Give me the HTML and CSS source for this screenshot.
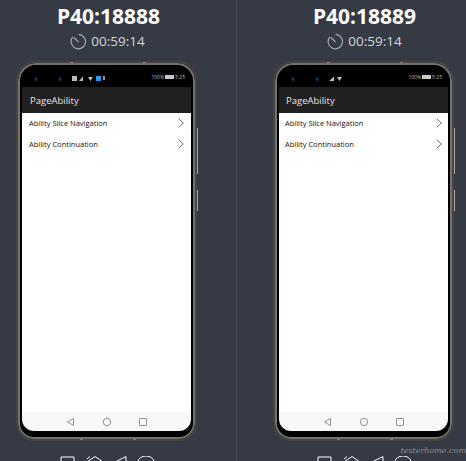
FILE: index.html
```html
<!DOCTYPE HTML>
<html>
	<head>
		<meta charset="UTF-8">
		<title>Device wall</title>
		<link rel="stylesheet" href="styles.css">
	</head>
	<body>
		<div class="wall">
			<div class="device device_left">
				<h1 class="device_name">P40:18888</h1>
				<div class="timer">
					<svg class="timer_icon" viewBox="0 0 18 18"><path d="M9 1.500A7.600 7.600 0 1 1 3 4.200"/><path d="M4 4.500L9 9.500"/></svg>
					<span>00:59:14</span>
				</div>
				<div class="phone">
					<span class="pin pin_top pin_a"></span>
					<span class="pin pin_top pin_b"></span>
					<span class="pin pin_bottom pin_a"></span>
					<span class="pin pin_bottom pin_b"></span>
					<span class="side_key side_key_long"></span>
					<span class="side_key side_key_short"></span>
					<div class="screen">
						<div class="status">
							<span class="dot dot_a"></span>
							<span class="dot dot_b"></span>
							<span class="status_icons">
								<svg width="33" height="7" viewBox="0 0 33 7"><rect x="0" y="1" width="5" height="5" fill="#bbb"/><path d="M7 6L11 1.500V6Z" fill="#bbb"/><path d="M16 2H21L18.500 6Z" fill="#bbb"/><rect x="24" y="1" width="5" height="5" fill="#2d9cf0"/><rect x="31" y="1" width="2" height="4" fill="#999"/></svg>
							</span>
							<span class="status_right">100%<i class="battery"></i>5:25</span>
						</div>
						<div class="appbar">PageAbility</div>
						<div class="content">
							<div class="row">Ability Slice Navigation<svg class="chevron" viewBox="0 0 6 10"><path d="M.7.7L5.300 5 .7 9.300"/></svg></div>
							<div class="row">Ability Continuation<svg class="chevron" viewBox="0 0 6 10"><path d="M.7.7L5.300 5 .7 9.300"/></svg></div>
						</div>
						<div class="softkeys">
							<svg class="softkey" viewBox="0 0 10 10"><path d="M7.500 1.500V8.500L1.500 5Z"/></svg>
							<svg class="softkey" viewBox="0 0 10 10"><circle cx="5" cy="5" r="3.700"/></svg>
							<svg class="softkey" viewBox="0 0 10 10"><rect x="1.500" y="1.500" width="7" height="7" rx=".6"/></svg>
						</div>
					</div>
				</div>
				<div class="controls">
					<svg viewBox="0 0 100 10" class="controls_icons"><path d="M1 10V1H14V10"/><path d="M27 6L35 .5 43 6M27 3L30 .5"/><path d="M55 6L66 .5V6"/><path d="M78 6A8 6 0 0 1 94 6V10M78 6V10"/></svg>
				</div>
			</div>
			<div class="device device_right">
				<h1 class="device_name">P40:18889</h1>
				<div class="timer">
					<svg class="timer_icon" viewBox="0 0 18 18"><path d="M9 1.500A7.600 7.600 0 1 1 3 4.200"/><path d="M4 4.500L9 9.500"/></svg>
					<span>00:59:14</span>
				</div>
				<div class="phone">
					<span class="pin pin_top pin_a"></span>
					<span class="pin pin_top pin_b"></span>
					<span class="pin pin_bottom pin_a"></span>
					<span class="pin pin_bottom pin_b"></span>
					<span class="side_key side_key_long"></span>
					<span class="side_key side_key_short"></span>
					<div class="screen">
						<div class="status">
							<span class="dot dot_a"></span>
							<span class="dot dot_b"></span>
							<span class="status_icons status_icons_short">
								<svg width="15" height="7" viewBox="0 0 15 7"><path d="M1 6L6 1.500V6Z" fill="#bbb"/><path d="M9 2H14L11.500 6Z" fill="#bbb"/></svg>
							</span>
							<span class="status_right">100%<i class="battery"></i>5:25</span>
						</div>
						<div class="appbar">PageAbility</div>
						<div class="content">
							<div class="row">Ability Slice Navigation<svg class="chevron" viewBox="0 0 6 10"><path d="M.7.7L5.300 5 .7 9.300"/></svg></div>
							<div class="row">Ability Continuation<svg class="chevron" viewBox="0 0 6 10"><path d="M.7.7L5.300 5 .7 9.300"/></svg></div>
						</div>
						<div class="softkeys">
							<svg class="softkey" viewBox="0 0 10 10"><path d="M7.500 1.500V8.500L1.500 5Z"/></svg>
							<svg class="softkey" viewBox="0 0 10 10"><circle cx="5" cy="5" r="3.700"/></svg>
							<svg class="softkey" viewBox="0 0 10 10"><rect x="1.500" y="1.500" width="7" height="7" rx=".6"/></svg>
						</div>
					</div>
				</div>
				<div class="controls">
					<svg viewBox="0 0 100 10" class="controls_icons"><path d="M1 10V1H14V10"/><path d="M27 6L35 .5 43 6M27 3L30 .5"/><path d="M55 6L66 .5V6"/><path d="M78 6A8 6 0 0 1 94 6V10M78 6V10"/></svg>
				</div>
			</div>
		</div>
		<div class="watermark">testerhome.com</div>
	</body>
</html>
```
FILE: styles.css
```css
html, body{
	margin: 0;
	height: 461px;
	overflow: hidden;
	background-color: #363a45;
	font-family: "Open Sans", "Noto Sans", sans-serif;
}
.wall{
	display: grid;
	grid-template-columns: 237px 229px;
	height: 461px;
}
.device{
	height: 461px;
	box-sizing: border-box;
	padding-top: 3px;
	overflow: hidden;
}
.device_left{
	border-right: 1px solid #4a4e5b;
	padding-left: 16px;
}
.device_right{
	padding-left: 36px;
}
.device_name{
	width: 181px;
	margin: 0 0 0 1px;
	color: #fff;
	font-size: 21px;
	font-weight: 700;
	line-height: 26px;
	text-align: center;
}
.device_left .device_name{
	margin-left: 2px;
}
.timer{
	width: 181px;
	height: 24px;
	margin-left: 1px;
	display: flex;
	align-items: center;
	justify-content: center;
	gap: 4px;
	color: #d4d6da;
	font-size: 13.500px;
}
.timer_icon{
	width: 17px;
	height: 17px;
	fill: none;
	stroke: #a6a8ad;
	stroke-width: 1.300;
}
.phone{
	position: relative;
	width: 181px;
	height: 380px;
	margin-top: 8px;
	box-sizing: border-box;
	padding: 2px 4px 8px;
	background-color: #000;
	border: 2px solid #45443f;
	border-radius: 20px 20px 18px 18px;
	box-shadow: inset 0 0 0 2px #74716e;
}
.pin{
	position: absolute;
	width: 3px;
	height: 1px;
	background-color: #8a7f74;
}
.pin_top{
	top: -1px;
}
.pin_bottom{
	bottom: -1px;
}
.pin_top.pin_a{
	left: 52px;
}
.pin_top.pin_b{
	left: 125px;
}
.pin_bottom.pin_a{
	left: 62px;
}
.pin_bottom.pin_b{
	left: 115px;
}
.side_key{
	position: absolute;
	right: -3px;
	width: 1px;
	background-color: #b5a295;
}
.side_key_long{
	top: 65px;
	height: 46px;
}
.side_key_short{
	top: 127px;
	height: 21px;
}
.screen{
	height: 366px;
	display: flex;
	flex-direction: column;
	overflow: hidden;
	border-radius: 15px 15px 12px 12px;
	background-color: #000;
}
.status{
	position: relative;
	height: 22px;
	flex: none;
	color: #bdbdbd;
	font-size: 5px;
}
.dot{
	position: absolute;
	top: 12px;
	width: 4px;
	height: 4px;
	border-radius: 50%;
	background-color: #0f2c50;
}
.dot_a{
	left: 12px;
}
.dot_b{
	left: 36px;
}
.status_icons{
	position: absolute;
	top: 10px;
	left: 50px;
}
.status_icons_short{
	left: 49px;
}
.status_right{
	position: absolute;
	top: 9px;
	right: 6px;
	display: flex;
	align-items: center;
	gap: 1px;
}
.battery{
	width: 9px;
	height: 4px;
	background-color: #c9c9c9;
}
.appbar{
	height: 26px;
	flex: none;
	box-sizing: border-box;
	padding-left: 7px;
	background-color: #202020;
	color: #e6e6e6;
	font-size: 9.500px;
	line-height: 27px;
}
.device_left .appbar{
	padding-left: 8px;
}
.content{
	flex: 1;
	background-color: #fff;
}
.row{
	height: 21px;
	box-sizing: border-box;
	display: flex;
	align-items: center;
	justify-content: space-between;
	padding: 0 6px 2px;
	color: #111;
	font-size: 7.500px;
}
.device_left .row{
	padding: 0 7px 2px;
}
.chevron{
	width: 6px;
	height: 10px;
	fill: none;
	stroke: #444;
	stroke-width: .8;
}
.softkeys{
	height: 19px;
	flex: none;
	display: flex;
	align-items: center;
	justify-content: center;
	gap: 26px;
	background-color: #f8f8f8;
}
.softkey{
	width: 10px;
	height: 10px;
	fill: none;
	stroke: #666;
	stroke-width: .7;
}
.controls{
	width: 181px;
	margin-top: 15px;
}
.controls_icons{
	display: block;
	width: 100px;
	height: 10px;
	margin-left: 44px;
	fill: none;
	stroke: #fff;
	stroke-width: 1;
}
.watermark{
	position: absolute;
	top: 446px;
	right: 0;
	color: #8b8e96;
	font-family: "DejaVu Serif", serif;
	font-size: 8px;
	font-style: italic;
}
```
